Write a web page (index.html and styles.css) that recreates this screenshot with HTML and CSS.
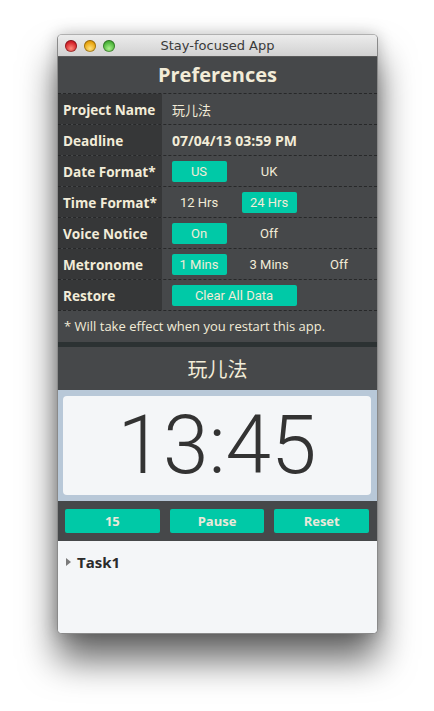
FILE: index.html
```html
<!DOCTYPE html>
<html lang="en">
<head>
    <meta charset="UTF-8">
    <meta name="viewport" content="width=device-width, initial-scale=1.0">
    <title>Stay-focused App</title>
    <link rel="stylesheet" href="styles.css">
</head>
<body>
    <div class="window">
        <div class="titlebar">
            <div class="lights">
                <span class="light red"></span>
                <span class="light yellow"></span>
                <span class="light green"></span>
            </div>
            <div class="title">Stay-focused App</div>
        </div>

        <div class="prefs">
            <h1>Preferences</h1>
            <div class="row">
                <div class="label">Project Name</div>
                <div class="value text cjk">玩儿法</div>
            </div>
            <div class="row">
                <div class="label">Deadline</div>
                <div class="value text bold">07/04/13 03:59 PM</div>
            </div>
            <div class="row">
                <div class="label">Date Format*</div>
                <div class="value">
                    <div class="opt"><span class="b on">US</span></div>
                    <div class="opt"><span class="b">UK</span></div>
                </div>
            </div>
            <div class="row">
                <div class="label">Time Format*</div>
                <div class="value">
                    <div class="opt"><span class="b">12 Hrs</span></div>
                    <div class="opt"><span class="b on">24 Hrs</span></div>
                </div>
            </div>
            <div class="row">
                <div class="label">Voice Notice</div>
                <div class="value">
                    <div class="opt"><span class="b on">On</span></div>
                    <div class="opt"><span class="b">Off</span></div>
                </div>
            </div>
            <div class="row">
                <div class="label">Metronome</div>
                <div class="value">
                    <div class="opt"><span class="b on">1 Mins</span></div>
                    <div class="opt"><span class="b">3 Mins</span></div>
                    <div class="opt"><span class="b">Off</span></div>
                </div>
            </div>
            <div class="row">
                <div class="label">Restore</div>
                <div class="value">
                    <div class="opt wide"><span class="b on">Clear All Data</span></div>
                </div>
            </div>
            <p class="note">* Will take effect when you restart this app.</p>
        </div>

        <div class="timer">
            <h2 class="cjk">玩儿法</h2>
            <div class="clock-wrap">
                <div class="clock">13:45</div>
            </div>
            <div class="controls">
                <button class="c">15</button>
                <button class="c">Pause</button>
                <button class="c">Reset</button>
            </div>
        </div>

        <div class="tasks">
            <div class="task"><span class="arrow"></span>Task1</div>
        </div>
    </div>
</body>
</html>
```

FILE: styles.css
```css
body {
    margin: 0;
    padding: 34px 0 80px 57px;
    background: #fff;
    font-family: "Open Sans", "Noto Sans", sans-serif;
}
.window {
    width: 319px;
    border: 1px solid #8a8a8a;
    border-top-color: #b0b0b0;
    border-radius: 5px;
    overflow: hidden;
    background: #f4f6f8;
    box-shadow: 0 26px 36px rgba(0, 0, 0, 0.6), 0 0 16px rgba(0, 0, 0, 0.22);
}
.titlebar {
    height: 21px;
    display: flex;
    align-items: center;
    position: relative;
    background: linear-gradient(#ececec, #d1d1d1);
    border-bottom: 1px solid #5a5a5a;
}
.lights {
    display: flex;
    gap: 7px;
    padding-left: 7px;
}
.light {
    width: 12px;
    height: 12px;
    border-radius: 50%;
    box-shadow: inset 0 0 0 1px rgba(0, 0, 0, 0.3);
}
.red { background: radial-gradient(circle at 50% 70%, #ff8a7a, #d4222a 60%, #a0101a); }
.yellow { background: radial-gradient(circle at 50% 70%, #ffe07a, #e8a40e 60%, #b07208); }
.green { background: radial-gradient(circle at 50% 70%, #a8f08a, #4cb53a 60%, #2e7f22); }
.title {
    position: absolute;
    left: 0;
    right: 0;
    text-align: center;
    font-family: "DejaVu Sans", sans-serif;
    font-size: 13px;
    color: #3a3a3a;
    pointer-events: none;
}
.prefs {
    background: #46484a;
    color: #f2ecd8;
}
.prefs h1 {
    margin: 0;
    height: 36px;
    line-height: 36px;
    text-align: center;
    font-size: 20px;
    font-weight: bold;
    border-bottom: 1px dashed #272829;
}
.row {
    display: flex;
    height: 30px;
    border-bottom: 1px dashed #272829;
}
.label {
    width: 99px;
    padding-left: 5px;
    background: #363738;
    font-size: 13.6px;
    font-weight: bold;
    display: flex;
    align-items: center;
    white-space: nowrap;
}
.value {
    flex: 1;
    display: flex;
    align-items: center;
    padding-left: 2px;
}
.value.text {
    padding-left: 10px;
    font-size: 13px;
}
.value.bold {
    font-weight: bold;
    font-size: 14px;
}
.cjk {
    font-family: "Noto Sans CJK SC", "Open Sans", sans-serif;
}
.opt {
    width: 70px;
    display: flex;
    justify-content: center;
}
.opt.wide {
    width: 140px;
}
.b {
    width: 55px;
    height: 21px;
    line-height: 21px;
    text-align: center;
    border-radius: 2px;
    font-family: Roboto, sans-serif;
    font-size: 13px;
    color: #f2ecd8;
}
.wide .b {
    width: 125px;
}
.b.on {
    background: #00c9a7;
}
.note {
    margin: 0;
    height: 31px;
    line-height: 31px;
    padding-left: 6px;
    font-size: 13px;
    border-bottom: 5px solid #2c3233;
}
.timer {
    background: #46484a;
}
.timer h2 {
    margin: 0;
    height: 43px;
    line-height: 43px;
    text-align: center;
    font-size: 20px;
    font-weight: normal;
    color: #f2ecd8;
}
.clock-wrap {
    background: #b8c8d8;
    padding: 6px 6px 6px 5px;
}
.clock {
    height: 99px;
    line-height: 99px;
    background: #f4f6f8;
    border-radius: 4px;
    text-align: center;
    font-family: Roboto, "Open Sans", sans-serif;
    font-weight: 300;
    font-size: 82px;
    color: #333;
}
.controls {
    height: 40px;
    display: flex;
    align-items: center;
    gap: 10px;
    padding: 0 8px 0 7px;
}
.c {
    flex: 1;
    height: 24px;
    border: none;
    border-radius: 2px;
    background: #00c9a7;
    color: #ebe8da;
    font-family: "Open Sans", sans-serif;
    font-weight: bold;
    font-size: 13px;
    padding: 0;
}
.tasks {
    height: 92px;
    background: #f4f6f8;
}
.task {
    display: flex;
    align-items: center;
    padding: 11px 0 0 8px;
    font-size: 15px;
    font-weight: bold;
    color: #2b2b2b;
}
.arrow {
    width: 0;
    height: 0;
    border-top: 4px solid transparent;
    border-bottom: 4px solid transparent;
    border-left: 5px solid #7a7a7a;
    margin-right: 6px;
}
```
